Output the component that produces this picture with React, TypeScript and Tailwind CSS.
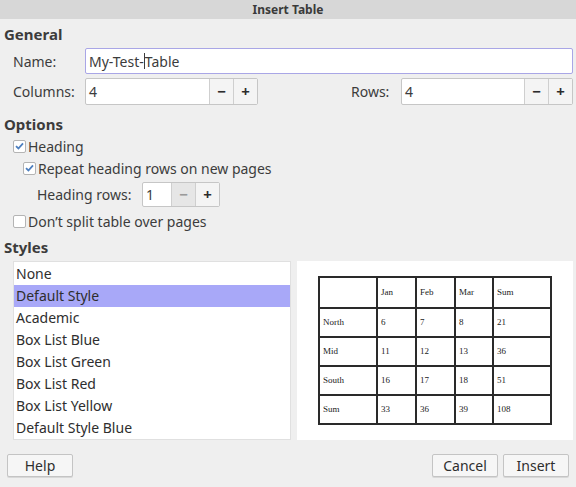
import React from "react";

const font = { fontFamily: '"Noto Sans", "Open Sans", sans-serif' };

function Check({ checked }: { checked: boolean }) {
  return (
    <span className="w-[13px] h-[13px] bg-white border border-[#b4b4b4] rounded-[2px] flex items-center justify-center shrink-0">
      {checked && (
        <svg width="9" height="8" viewBox="0 0 9 8">
          <path d="M1 4.2 L3.4 6.5 L8 1.3" fill="none" stroke="#4d7fbf" strokeWidth="1.8" />
        </svg>
      )}
    </span>
  );
}

function Spin({
  value,
  width,
  btn,
  minusDisabled,
}: {
  value: string;
  width: string;
  btn: string;
  minusDisabled?: boolean;
}) {
  return (
    <div className={`flex h-full border border-[#c6c6c6] rounded-[2px] bg-white ${width}`}>
      <div className="flex-1 flex items-center pl-[3px] text-[#3c3c3c]">{value}</div>
      <div
        className={`${btn} flex items-center justify-center border-l border-[#cfcfcf] ${
          minusDisabled ? "bg-[#e6e6e6] text-[#9a9a9a]" : "bg-[#f4f4f4] text-[#2c2c2c]"
        } text-[15px] font-bold`}
      >
        −
      </div>
      <div className={`${btn} flex items-center justify-center border-l border-[#cfcfcf] bg-[#f4f4f4] text-[#2c2c2c] text-[15px] font-bold`}>
        +
      </div>
    </div>
  );
}

const styles = [
  "None",
  "Default Style",
  "Academic",
  "Box List Blue",
  "Box List Green",
  "Box List Red",
  "Box List Yellow",
  "Default Style Blue",
];

const table = [
  ["", "Jan", "Feb", "Mar", "Sum"],
  ["North", "6", "7", "8", "21"],
  ["Mid", "11", "12", "13", "36"],
  ["South", "16", "17", "18", "51"],
  ["Sum", "33", "36", "39", "108"],
];
const colW = ["w-[56px]", "w-[39px]", "w-[39px]", "w-[38px]", "w-[58px]"];

export default function App() {
  return (
    <div className="w-[576px] h-[487px] bg-[#efefef] flex flex-col text-[14px] text-[#3c3c3c] overflow-hidden" style={font}>
      <div className="h-[19px] bg-[#d7d7d7] flex items-center justify-center text-[12px] font-bold text-[#3a3a3a] shrink-0">
        Insert Table
      </div>

      <div className="mt-[6px] h-[18px] leading-[18px] pl-[4px] font-bold text-[15px]">General</div>

      <div className="mt-[5px] h-[26px] flex items-center">
        <span className="w-[85px] pl-[13px]">Name:</span>
        <div className="w-[488px] h-full bg-white border border-[#a9a6e6] rounded-[2px] flex items-center pl-[3px]">
          My-Test-<span className="w-px h-[16px] bg-[#3c3c3c]"></span>Table
        </div>
      </div>

      <div className="mt-[4px] h-[27px] flex items-center">
        <span className="w-[85px] pl-[13px]">Columns:</span>
        <Spin value="4" width="w-[173px]" btn="w-[24px]" />
        <span className="ml-auto w-[50px]">Rows:</span>
        <Spin value="4" width="w-[172px]" btn="w-[24px]" />
        <span className="w-[3px]" />
      </div>

      <div className="mt-[10px] h-[18px] leading-[18px] pl-[4px] font-bold text-[15px]">Options</div>

      <div className="mt-[4px] h-[18px] flex items-center pl-[13px] gap-[2px]">
        <Check checked />
        <span>Heading</span>
      </div>
      <div className="mt-[4px] h-[18px] flex items-center pl-[23px] gap-[2px]">
        <Check checked />
        <span>Repeat heading rows on new pages</span>
      </div>
      <div className="mt-[5px] h-[25px] flex items-center">
        <span className="w-[142px] pl-[37px]">Heading rows:</span>
        <Spin value="1" width="w-[78px]" btn="w-[24px]" minusDisabled />
      </div>
      <div className="mt-[5px] h-[18px] flex items-center pl-[13px] gap-[2px]">
        <Check checked={false} />
        <span>Don’t split table over pages</span>
      </div>

      <div className="mt-[8px] h-[18px] leading-[18px] pl-[4px] font-bold text-[15px]">Styles</div>

      <div className="mt-[5px] h-[179px] flex pl-[13px] gap-[6px]">
        <div className="w-[278px] h-full bg-white border border-[#e0e0e0] flex flex-col pt-[1px]">
          {styles.map((s, i) => (
            <div
              key={s}
              className={`h-[22px] leading-[22px] pl-[2px] text-[#2e2e2e] ${i === 1 ? "bg-[#a8a8f8]" : ""}`}
            >
              {s}
            </div>
          ))}
        </div>
        <div className="w-[276px] h-full bg-white flex items-center justify-center">
          <div
            className="border-2 border-[#2a2a2a] flex flex-col text-[9px] text-[#222]"
            style={{ fontFamily: '"Liberation Serif", serif' }}
          >
            {table.map((row, r) => (
              <div key={r} className={`flex h-[29px] ${r > 0 ? "border-t-2 border-[#2a2a2a]" : ""}`}>
                {row.map((c, ci) => (
                  <div
                    key={ci}
                    className={`${colW[ci]} flex items-center pl-[3px] ${ci > 0 ? "border-l-2 border-[#2a2a2a]" : ""}`}
                  >
                    {c}
                  </div>
                ))}
              </div>
            ))}
          </div>
        </div>
      </div>

      <div className="mt-[14px] h-[23px] flex px-[7px] gap-[5px]">
        <button className="w-[66px] h-full bg-[#f6f6f6] border border-[#c4c4c4] rounded-[2px] shadow-[0_1px_0_#d8d8d8] text-[#2e2e2e]">
          Help
        </button>
        <button className="ml-auto w-[66px] h-full bg-[#f6f6f6] border border-[#c4c4c4] rounded-[2px] shadow-[0_1px_0_#d8d8d8] text-[#2e2e2e]">
          Cancel
        </button>
        <button className="w-[66px] h-full bg-[#f6f6f6] border border-[#c4c4c4] rounded-[2px] shadow-[0_1px_0_#d8d8d8] text-[#2e2e2e]">
          Insert
        </button>
      </div>
    </div>
  );
}
